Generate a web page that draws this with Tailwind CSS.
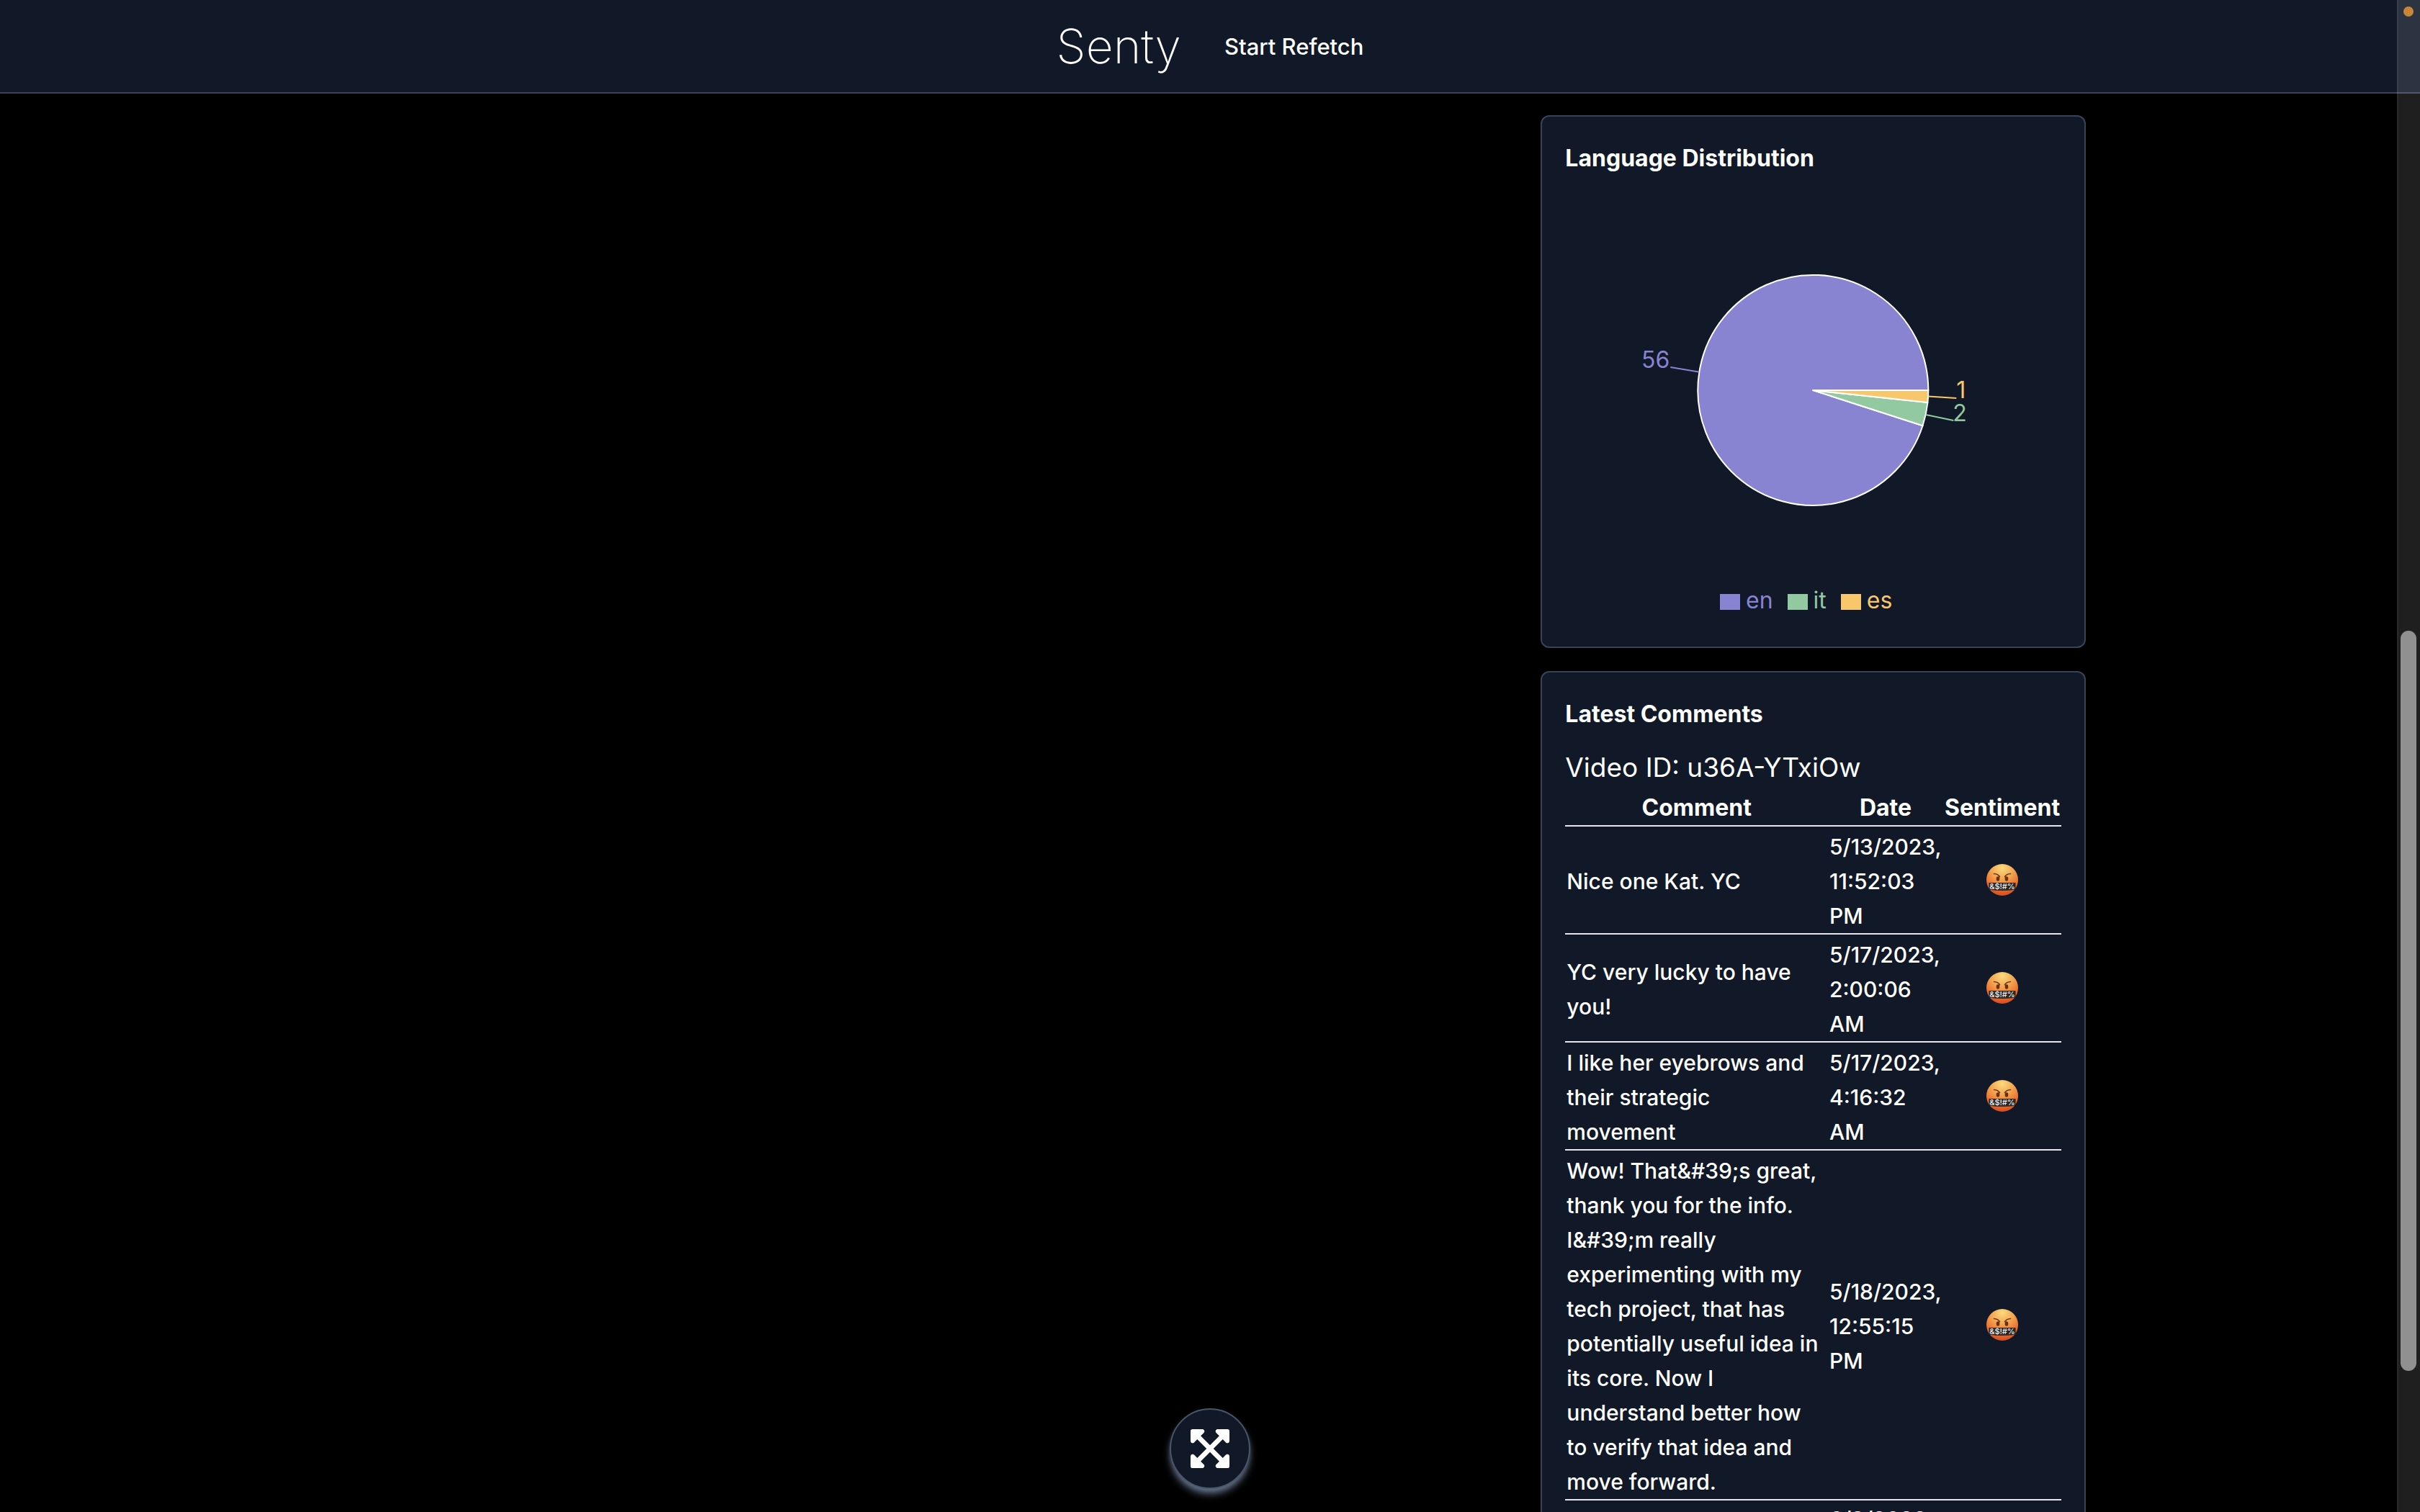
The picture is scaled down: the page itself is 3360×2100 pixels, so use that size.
<!DOCTYPE html>
<html lang="en">
<head>
<meta charset="utf-8">
<title>Senty</title>
<script src="https://cdn.jsdelivr.net/npm/@tailwindcss/browser@4"></script>
</head>
<body class="relative h-screen overflow-hidden bg-black font-[Inter,'Liberation_Sans',sans-serif] text-[32px] leading-[48px] text-white">
<svg class="absolute size-0" aria-hidden="true">
  <defs>
    <radialGradient id="face" cx="50%" cy="12%" r="90%">
      <stop offset="0" stop-color="#fadb80"/><stop offset=".4" stop-color="#f3a550"/><stop offset=".75" stop-color="#ea6c2c"/><stop offset="1" stop-color="#d44a20"/>
    </radialGradient>
    <symbol id="cursing" viewBox="0 0 44 44">
      <circle cx="22" cy="22" r="22" fill="url(#face)"/>
      <path d="M10.5 13.5q5.500 .3 8 4.200M33.500 13.500q-5.500 .3-8 4.200" fill="none" stroke="#6b2f10" stroke-width="1.600" stroke-linecap="round"/>
      <ellipse cx="16" cy="20.500" rx="2.300" ry="3.300" fill="#6b2f10"/><ellipse cx="28" cy="20.500" rx="2.300" ry="3.300" fill="#6b2f10"/>
      <path d="M3.500 26h37v9.500q-18.500 3-37 0z" fill="#2a2624"/>
      <text x="22" y="35" text-anchor="middle" font-size="11" font-weight="500" fill="#eeeeee">&amp;$!#%</text>
    </symbol>
  </defs>
</svg>

<header class="flex h-[130px] items-center justify-center gap-[60px] border-b-2 border-[#384456] bg-[#111827]">
  <a href="#" class="text-[66px] leading-[80px] font-[180]">Senty</a>
  <button type="button" class="pt-0.5 text-[31px] font-medium">Start Refetch</button>
</header>

<main class="mx-auto grid max-w-[2560px] grid-cols-3 gap-x-[81px] px-16 pt-[30px]">
  <div class="col-start-3 flex flex-col gap-8">
    <section class="rounded-xl border-2 border-[#384456] bg-[#111827] px-8 pt-[34px] pb-8">
      <h2 class="mb-[22px] font-bold">Language Distribution</h2>
      <div class="flex h-[600px] flex-col justify-between pb-2">
        <svg class="h-[542px] w-full" viewBox="0 0 688 542" role="img" aria-label="Language distribution: en 56, it 2, es 1">
          <g stroke="#ffffff" stroke-width="2" stroke-linejoin="round">
            <path d="M344 276L496.200 325.300A160 160 0 1 1 504 276Z" fill="#8884d2"/>
            <path d="M344 276L503.100 293A160 160 0 0 1 496.200 325.300Z" fill="#92c9a0"/>
            <path d="M344 276L504 276A160 160 0 0 1 503.100 293Z" fill="#f8c76c"/>
          </g>
          <g fill="none" stroke-width="2">
            <path d="M185 250.500L146 244" stroke="#8884d2"/>
            <path d="M500.500 310L539 318" stroke="#92c9a0"/>
            <path d="M504 284.500L543 287" stroke="#f8c76c"/>
          </g>
          <text x="145" y="245" text-anchor="end" fill="#8884d2">56</text>
          <text x="538" y="319" fill="#92c9a0">2</text>
          <text x="543" y="287" fill="#f8c76c">1</text>
        </svg>
        <ul class="flex justify-center gap-5 pr-5">
          <li class="flex items-center gap-2 text-[#8884d2]"><span class="mt-1 h-[22px] w-7 bg-[#8884d2]"></span>en</li>
          <li class="flex items-center gap-2 text-[#92c9a0]"><span class="mt-1 h-[22px] w-7 bg-[#92c9a0]"></span>it</li>
          <li class="flex items-center gap-2 text-[#f8c76c]"><span class="mt-1 h-[22px] w-7 bg-[#f8c76c]"></span>es</li>
        </ul>
      </div>
    </section>

    <section class="rounded-xl border-2 border-[#384456] bg-[#111827] px-8 pt-[34px] pb-8">
      <h2 class="mb-[22px] font-bold">Latest Comments</h2>
      <h3 class="text-[37px] leading-[56px]">Video ID: u36A-YTxiOw</h3>
      <table class="w-full table-fixed border-separate border-spacing-0 text-[30px] font-[450]">
        <colgroup><col><col class="w-[160px]"><col class="w-[164px]"></colgroup>
        <thead class="text-[32px]">
          <tr>
            <th scope="col" class="border-b-2 border-gray-200 px-0.5 pt-1 font-bold">Comment</th>
            <th scope="col" class="border-b-2 border-gray-200 px-0.5 pt-1 font-bold">Date</th>
            <th scope="col" class="border-b-2 border-gray-200 px-0.5 pt-1 font-bold">Sentiment</th>
          </tr>
        </thead>
        <tbody>
          <tr>
            <td class="border-b-2 border-gray-200 pt-1 pr-3 pl-0.5">Nice one Kat. YC</td>
            <td class="border-b-2 border-gray-200 px-0.5 pt-1">5/13/2023, 11:52:03 PM</td>
            <td class="border-b-2 border-gray-200 p-0.5"><svg class="mx-auto size-11" role="img" aria-label="Negative"><use href="#cursing"/></svg></td>
          </tr>
          <tr>
            <td class="border-b-2 border-gray-200 pt-1 pr-3 pl-0.5">YC very lucky to have you!</td>
            <td class="border-b-2 border-gray-200 px-0.5 pt-1">5/17/2023, 2:00:06 AM</td>
            <td class="border-b-2 border-gray-200 p-0.5"><svg class="mx-auto size-11" role="img" aria-label="Negative"><use href="#cursing"/></svg></td>
          </tr>
          <tr>
            <td class="border-b-2 border-gray-200 pt-1 pr-3 pl-0.5">I like her eyebrows and their strategic movement</td>
            <td class="border-b-2 border-gray-200 px-0.5 pt-1">5/17/2023, 4:16:32 AM</td>
            <td class="border-b-2 border-gray-200 p-0.5"><svg class="mx-auto size-11" role="img" aria-label="Negative"><use href="#cursing"/></svg></td>
          </tr>
          <tr>
            <td class="border-b-2 border-gray-200 pt-1 pr-3 pl-0.5">Wow! That&amp;#39;s great, thank you for the info. I&amp;#39;m really experimenting with my tech project, that has potentially useful idea in its core. Now I understand better how to verify that idea and move forward.</td>
            <td class="border-b-2 border-gray-200 px-0.5 pt-1">5/18/2023, 12:55:15 PM</td>
            <td class="border-b-2 border-gray-200 p-0.5"><svg class="mx-auto size-11" role="img" aria-label="Negative"><use href="#cursing"/></svg></td>
          </tr>
          <tr>
            <td class="border-b-2 border-gray-200 p-0.5"></td>
            <td class="border-b-2 border-gray-200 p-0.5">6/9/2023,</td>
            <td class="border-b-2 border-gray-200 p-0.5"></td>
          </tr>
        </tbody>
      </table>
    </section>
  </div>
</main>

<button type="button" aria-label="Expand" class="absolute bottom-8 left-1/2 flex size-28 -translate-x-1/2 items-center justify-center rounded-full border-2 border-[#475569] bg-[#111827] shadow-[0_8px_12px_-2px_#64748b,0_4px_8px_-4px_#64748b]">
  <svg class="h-[54px] w-[54px]" viewBox="0 32 448 448" fill="currentColor"><path d="M448 344v112a23.940 23.940 0 0 1-24 24H312c-21.390 0-32.090-25.900-17-41l36.200-36.200L224 295.600 116.770 402.900 153 439c15.090 15.100 4.390 41-17 41H24a23.940 23.940 0 0 1-24-24V344c0-21.400 25.890-32.100 41-17l36.190 36.200L184.460 256 77.180 148.700 41 185c-15.100 15.100-41 4.400-41-17V56a23.940 23.940 0 0 1 24-24h112c21.390 0 32.090 25.900 17 41l-36.200 36.200L224 216.400l107.230-107.300L295 73c-15.090-15.100-4.390-41 17-41h112a23.940 23.940 0 0 1 24 24v112c0 21.400-25.890 32.100-41 17l-36.190-36.200L263.540 256l107.280 107.300L407 327.100c15.100-15.200 41-4.500 41 16.900z"/></svg>
</button>

<div class="absolute inset-y-0 right-0 w-8 border-l-2 border-white/5 bg-white/12" aria-hidden="true">
  <span class="absolute top-[9px] right-[9px] size-[14px] rounded-full bg-[#c98638]"></span>
  <span class="absolute top-[876px] right-[5px] h-[1028px] w-[22px] rounded-full bg-[#909090]"></span>
</div>
</body>
</html>
